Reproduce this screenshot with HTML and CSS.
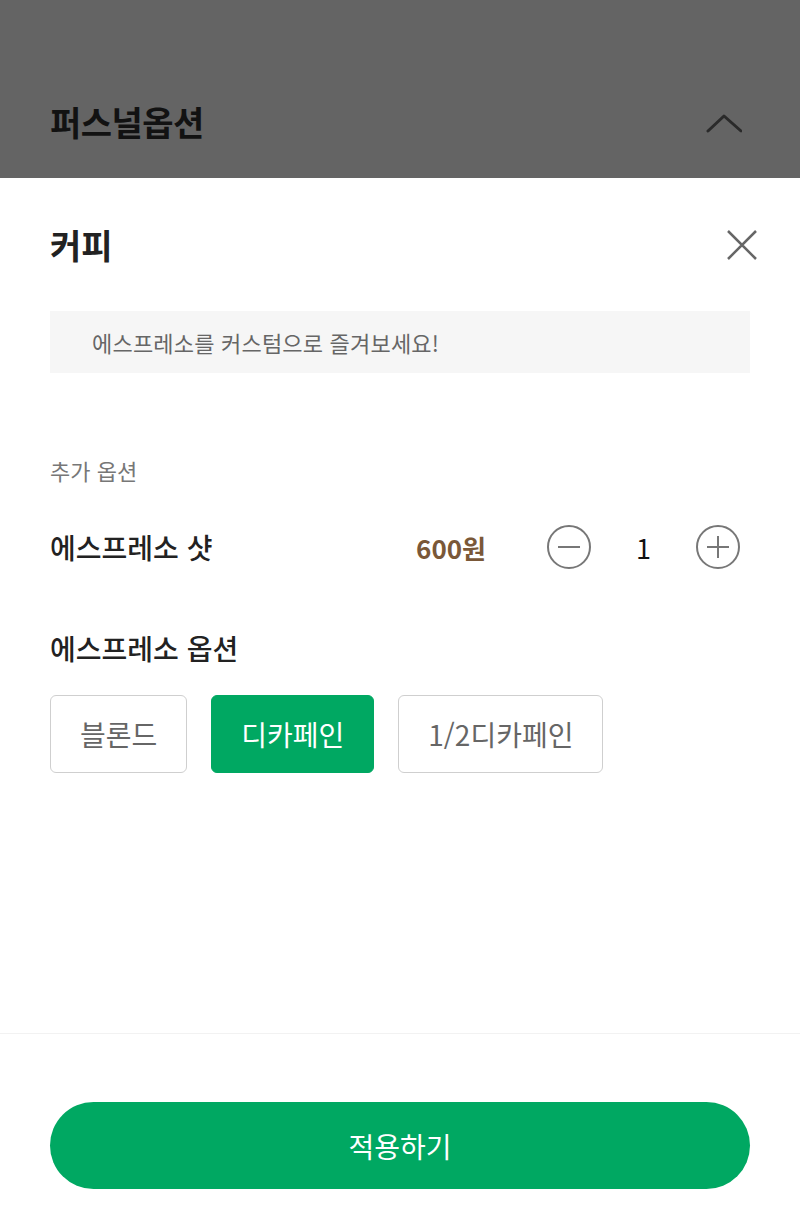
FILE: index.html
```html
<!DOCTYPE html>
<html lang="ko">

<head>
    <meta charset="UTF-8">
    <meta name="viewport" content="width=device-width, initial-scale=1.0">
    <title>퍼스널옵션</title>

    <link rel="stylesheet" href="styles.css">
</head>

<body>

    <div class="backdrop">
        <header class="page-header">
            <h1 class="page-title">퍼스널옵션</h1>
            <svg class="chevron" width="36" height="20" viewBox="0 0 36 20">
                <polyline points="2,18 18,3 35,18" fill="none" stroke="currentColor" stroke-width="3"
                    stroke-linecap="round" stroke-linejoin="round" />
            </svg>
        </header>
    </div>

    <section class="sheet">
        <div class="sheet-head">
            <h2 class="sheet-title">커피</h2>
            <button class="close-button" aria-label="닫기">
                <svg width="32" height="32" viewBox="0 0 32 32">
                    <path d="M2 2 L30 30 M30 2 L2 30" fill="none" stroke="currentColor" stroke-width="2.5" />
                </svg>
            </button>
        </div>

        <p class="notice">에스프레소를 커스텀으로 즐겨보세요!</p>

        <h3 class="group-label">추가 옵션</h3>
        <div class="option-row">
            <span class="option-name">에스프레소 샷</span>
            <span class="option-price">600원</span>
            <div class="stepper">
                <button class="step-button" aria-label="빼기">
                    <svg width="44" height="44" viewBox="0 0 44 44">
                        <circle cx="22" cy="22" r="21" fill="none" stroke="currentColor" stroke-width="2" />
                        <path d="M11 22 H33" stroke="currentColor" stroke-width="2" />
                    </svg>
                </button>
                <span class="step-count">1</span>
                <button class="step-button" aria-label="더하기">
                    <svg width="44" height="44" viewBox="0 0 44 44">
                        <circle cx="22" cy="22" r="21" fill="none" stroke="currentColor" stroke-width="2" />
                        <path d="M11 22 H33 M22 11 V33" stroke="currentColor" stroke-width="2" />
                    </svg>
                </button>
            </div>
        </div>

        <h3 class="group-title">에스프레소 옵션</h3>
        <div class="choice-list">
            <button class="choice">블론드</button>
            <button class="choice selected">디카페인</button>
            <button class="choice">1/2디카페인</button>
        </div>

        <footer class="sheet-footer">
            <button class="apply-button">적용하기</button>
        </footer>
    </section>

</body>

</html>
```

FILE: styles.css
```css
/* 기본 */
* {
    box-sizing: border-box;
}

body {
    margin: 0;
    width: 800px;
    height: 1231px;
    display: flex;
    flex-direction: column;
    font-family: "Noto Sans CJK KR", "Noto Sans", sans-serif;
    color: #222;
    background: #fff;
}

h1, h2, h3, p {
    margin: 0;
}

button {
    font-family: inherit;
    border: none;
    background: none;
    padding: 0;
    cursor: pointer;
}

/* 뒤쪽 화면 (어둡게) */
.backdrop {
    height: 178px;
    flex-shrink: 0;
    background-color: #646464;
    padding: 91px 50px 0;
}

.page-header {
    height: 60px;
    display: flex;
    align-items: center;
    justify-content: space-between;
}

.page-title {
    font-size: 34px;
    font-weight: 700;
    letter-spacing: -0.5px;
    color: #121212;
}

.chevron {
    margin-right: 8px;
    margin-top: 4px;
    color: #2a2a2a;
}

/* 바텀시트 */
.sheet {
    flex: 1;
    display: flex;
    flex-direction: column;
    padding: 0 50px;
}

.sheet-head {
    height: 133px;
    display: flex;
    align-items: center;
    justify-content: space-between;
}

.sheet-title {
    font-size: 34px;
    font-weight: 700;
    color: #222;
}

.close-button {
    display: flex;
    margin-right: -8px;
    color: #666;
}

.notice {
    height: 62px;
    line-height: 62px;
    padding-left: 42px;
    background-color: #f6f6f6;
    font-size: 22px;
    letter-spacing: 0.2px;
    color: #666;
}

.group-label {
    margin-top: 82px;
    line-height: 30px;
    font-size: 22px;
    font-weight: 400;
    color: #777;
}

.option-row {
    margin-top: 32px;
    height: 60px;
    display: flex;
    align-items: center;
}

.option-name {
    flex: 1;
    font-size: 28px;
    font-weight: 500;
}

.option-price {
    margin-right: 61px;
    font-size: 26px;
    font-weight: 700;
    color: #7a5838;
}

.stepper {
    display: flex;
    align-items: center;
    margin-right: 10px;
}

.step-button {
    display: flex;
    color: #777;
}

.step-count {
    width: 105px;
    text-align: center;
    font-size: 27px;
    color: #111;
}

.group-title {
    margin-top: 53px;
    line-height: 36px;
    font-size: 28px;
    font-weight: 500;
}

.choice-list {
    margin-top: 29px;
    display: flex;
    gap: 24px;
}

.choice {
    height: 78px;
    padding: 0 29px;
    border: 1px solid #cfcfcf;
    border-radius: 6px;
    font-size: 28px;
    color: #666;
    background: #fff;
}

.choice.selected {
    border-color: #00a862;
    background-color: #00a862;
    color: #fff;
}

/* 하단 버튼 */
.sheet-footer {
    margin: auto -50px 0;
    padding: 68px 50px 42px;
    border-top: 1px solid #f2f2f2;
}

.apply-button {
    width: 100%;
    height: 87px;
    border-radius: 44px;
    background-color: #00a862;
    color: #fff;
    font-size: 28px;
}
```
